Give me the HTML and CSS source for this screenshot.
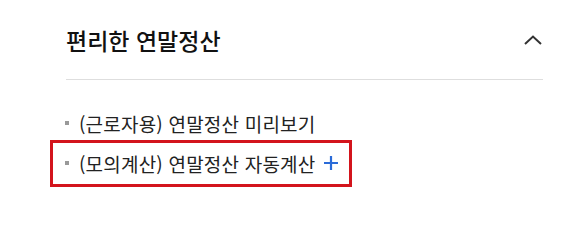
FILE: index.html
```html
<!DOCTYPE html>
<html lang="ko">
<head>
<meta charset="utf-8">
<link rel="stylesheet" href="styles.css">
</head>
<body>
<section class="panel">
  <div class="panel-head">
    <h2 class="panel-title">편리한 연말정산</h2>
    <svg class="chevron" width="18" height="10" viewBox="0 0 18 10"><path d="M1 9 L9 1.5 L17 9" fill="none" stroke="#333" stroke-width="2"/></svg>
  </div>
  <ul class="links">
    <li class="link-item"><span class="bullet"></span>(근로자용) 연말정산 미리보기</li>
    <li class="link-item focused"><span class="bullet"></span>(모의계산) 연말정산 자동계산<svg class="plus" width="14" height="14" viewBox="0 0 14 14"><path d="M7 0 V14 M0 7 H14" stroke="#2a6bd8" stroke-width="2.2" fill="none"/></svg></li>
  </ul>
</section>
</body>
</html>
```
FILE: styles.css
```css
html, body { margin: 0; padding: 0; background: #fff; }
body { font-family: "Noto Sans CJK KR", "Noto Sans", sans-serif; min-height: 231px; }
.panel { width: 477px; padding: 0 0 40px 66px; }
.panel-head {
  height: 80px;
  border-bottom: 1px solid #dedede;
  display: flex;
  align-items: center;
  justify-content: space-between;
  box-sizing: border-box;
}
.panel-title { margin: 0; font-size: 23px; font-weight: 500; color: #111; }
.chevron { margin-right: 1px; display: block; }
.links {
  list-style: none;
  margin: 23px 0 0 -13px;
  padding: 0 0 10px;
  display: flex;
  flex-direction: column;
  align-items: flex-start;
}
.link-item {
  position: relative;
  height: 40px;
  display: flex;
  align-items: center;
  padding: 0 11px 0 12px;
  font-size: 19px;
  letter-spacing: 0.2px;
  color: #222;
}
.focused::after {
  content: "";
  position: absolute;
  top: -3px; left: -3px; right: -3px; bottom: -4px;
  border: 3px solid #d3141c;
}
.bullet { width: 4px; height: 4px; background: #999; margin-right: 10px; flex: none; }
.plus { margin-left: 9px; display: block; }
```
